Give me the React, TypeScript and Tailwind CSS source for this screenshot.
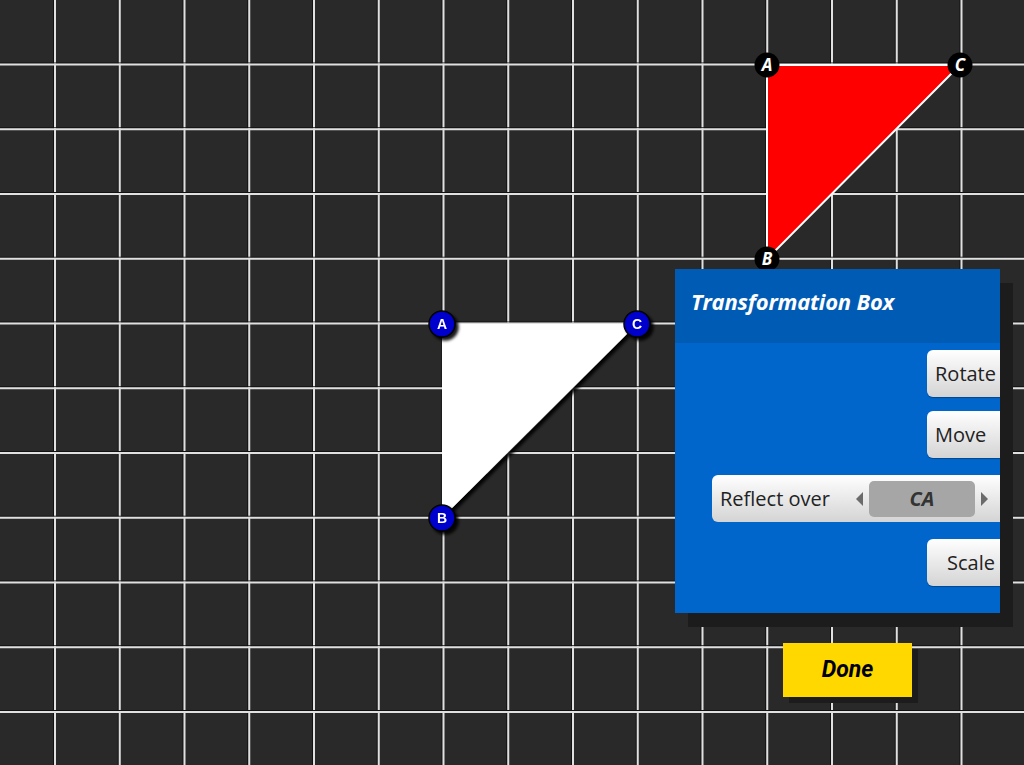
import React from "react";

const S = 64.75;
const X0 = 55;
const Y0 = 64.5;

const GridCanvas = () => {
	const xs = Array.from({ length: 16 }, (_, i) => X0 + i * S);
	const ys = Array.from({ length: 12 }, (_, i) => Y0 + i * S);
	return (
		<svg className="absolute inset-0" width={1024} height={765} viewBox="0 0 1024 765">
			<defs>
				<filter id="drop" x="-20%" y="-20%" width="150%" height="150%">
					<feDropShadow dx="3" dy="3" stdDeviation="1.5" floodColor="#000" floodOpacity="0.9" />
				</filter>
			</defs>
			{/* grid */}
			{xs.map((x) => (
				<g key={"x" + x}>
					<line x1={x - 1.5} y1={0} x2={x - 1.5} y2={765} stroke="#111" strokeWidth={1} />
					<line x1={x} y1={0} x2={x} y2={765} stroke="#e0e0e0" strokeWidth={2} />
				</g>
			))}
			{ys.map((y) => (
				<g key={"y" + y}>
					<line x1={0} y1={y - 1.5} x2={1024} y2={y - 1.5} stroke="#111" strokeWidth={1} />
					<line x1={0} y1={y} x2={1024} y2={y} stroke="#e0e0e0" strokeWidth={2} />
				</g>
			))}

			{/* red image triangle */}
			<polygon points="767,65 960,65 767,259" fill="#ff0000" stroke="#ffffff" strokeWidth={2} />
			{[
				{ l: "A", x: 767, y: 65 },
				{ l: "C", x: 960, y: 65 },
				{ l: "B", x: 767, y: 259 },
			].map((p) => (
				<g key={"r" + p.l}>
					<circle cx={p.x} cy={p.y} r={12.5} fill="#000" />
					<text
						x={p.x}
						y={p.y + 6}
						textAnchor="middle"
						fill="#fff"
						fontSize={17}
						fontWeight={700}
						fontStyle="italic"
						fontFamily="'Open Sans', sans-serif"
					>
						{p.l}
					</text>
				</g>
			))}

			{/* white pre-image triangle */}
			<polygon points="442,324 637,324 442,518" fill="#ffffff" filter="url(#drop)" />
			{[
				{ l: "A", x: 442, y: 324 },
				{ l: "C", x: 637, y: 324 },
				{ l: "B", x: 442, y: 518 },
			].map((p) => (
				<g key={"w" + p.l} filter="url(#drop)">
					<circle cx={p.x} cy={p.y} r={13} fill="#0000cc" stroke="#000" strokeWidth={1.5} />
					<text
						x={p.x}
						y={p.y + 5}
						textAnchor="middle"
						fill="#fff"
						fontSize={14}
						fontWeight={700}
						fontFamily="'Liberation Sans', Arial, sans-serif"
					>
						{p.l}
					</text>
				</g>
			))}
		</svg>
	);
};

const SideButton = ({ label, pad = "pl-2" }: { label: string; pad?: string }) => (
	<button
		className={`h-[47px] w-[90px] self-end mr-[-17px] rounded-[6px] bg-gradient-to-b from-white to-[#d4d4d4] ${pad} text-left text-[20px] text-[#222] shadow-[0_1px_1px_rgba(0,0,0,0.3)]`}
	>
		{label}
	</button>
);

const Arrow = ({ dir }: { dir: "left" | "right" }) => (
	<svg width={7} height={14} viewBox="0 0 7 14">
		<polygon points={dir === "left" ? "7,0 7,14 0,7" : "0,0 0,14 7,7"} fill="#6b6b6b" />
	</svg>
);

export default function App() {
	return (
		<div
			className="relative h-[765px] w-[1024px] overflow-hidden bg-[#292929]"
			style={{ fontFamily: "'Open Sans', sans-serif" }}
		>
			<GridCanvas />

			{/* transformation box */}
			<div className="absolute left-[675px] top-[269px] flex h-[344px] w-[325px] flex-col overflow-hidden bg-[#0066cc] shadow-[13px_14px_0_#1c1c1c]">
				<div className="flex h-[74px] items-center bg-[#005bb5] px-4 pb-[10px]">
					<h2 className="text-[22px] font-bold italic tracking-[-0.2px] text-white">Transformation Box</h2>
				</div>
				<div className="flex flex-1 flex-col gap-[15px] pt-[7px]">
					<div className="flex flex-col gap-[14px]">
						<SideButton label="Rotate" />
						<SideButton label="Move" />
					</div>
					<div className="ml-[37px] mr-[-12px] mt-[2px] flex h-[47px] items-center rounded-[6px] bg-gradient-to-b from-white to-[#d4d4d4] pl-2 text-[20px] text-[#222]">
						<span className="w-[136px]">Reflect over</span>
						<Arrow dir="left" />
						<span className="mx-[6px] flex h-[36px] w-[106px] items-center justify-center rounded-[5px] bg-[#a6a6a6] text-[20px] font-bold italic text-[#333]">
							CA
						</span>
						<Arrow dir="right" />
					</div>
					<div className="mt-[2px] flex flex-col">
						<SideButton label="Scale" pad="pl-[20px]" />
					</div>
				</div>
			</div>

			{/* done */}
			<button
				className="absolute left-[783px] top-[643px] flex h-[54px] w-[129px] items-center justify-center bg-[#ffd800] text-[23px] font-bold italic text-black shadow-[6px_6px_0_#1c1c1c]"
				style={{ fontFamily: "Roboto, sans-serif" }}
			>
				Done
			</button>
		</div>
	);
}
